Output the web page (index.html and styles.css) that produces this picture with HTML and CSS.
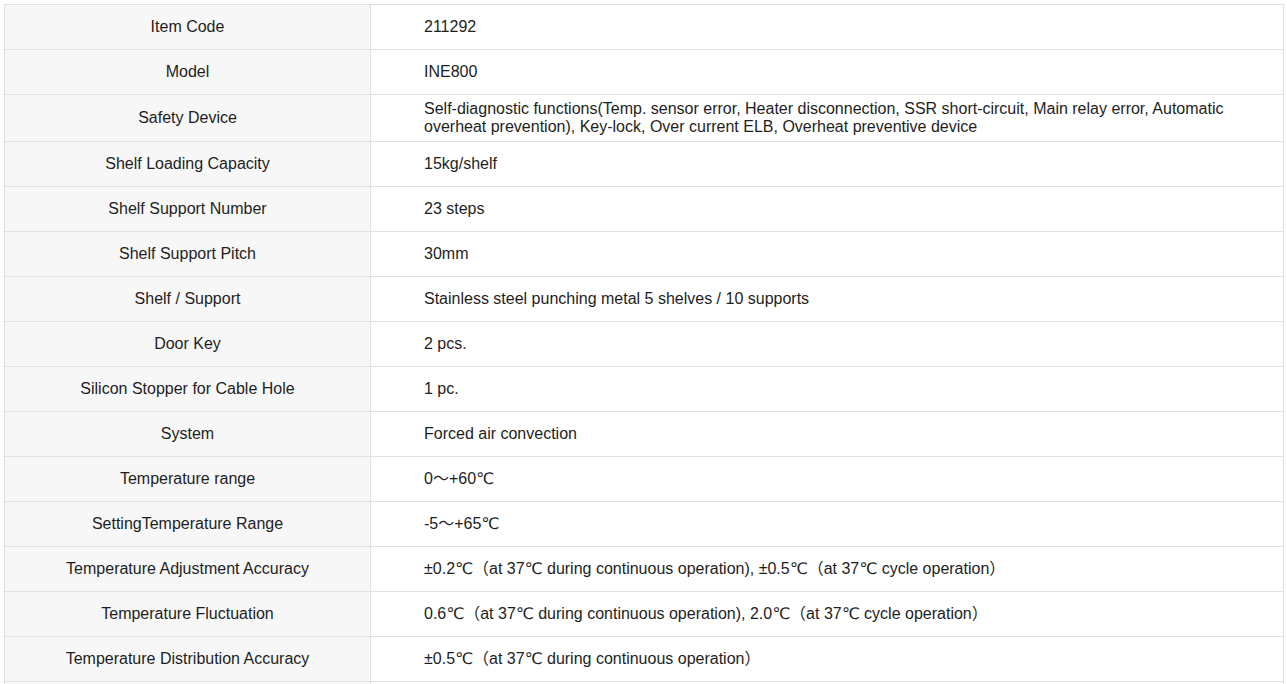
FILE: index.html
```html
<!DOCTYPE html>
<html>
<head>
<meta charset="utf-8">
<link rel="stylesheet" href="styles.css">
</head>
<body>
<div class="page">
<table class="spec">
<tr><th>Item Code</th><td>211292</td></tr>
<tr><th>Model</th><td>INE800</td></tr>
<tr><th>Safety Device</th><td>Self-diagnostic functions(Temp. sensor error, Heater disconnection, SSR short-circuit, Main relay error, Automatic overheat prevention), Key-lock, Over current ELB, Overheat preventive device</td></tr>
<tr><th>Shelf Loading Capacity</th><td>15kg/shelf</td></tr>
<tr><th>Shelf Support Number</th><td>23 steps</td></tr>
<tr><th>Shelf Support Pitch</th><td>30mm</td></tr>
<tr><th>Shelf / Support</th><td>Stainless steel punching metal 5 shelves / 10 supports</td></tr>
<tr><th>Door Key</th><td>2 pcs.</td></tr>
<tr><th>Silicon Stopper for Cable Hole</th><td>1 pc.</td></tr>
<tr><th>System</th><td>Forced air convection</td></tr>
<tr><th>Temperature range</th><td>0～+60℃</td></tr>
<tr><th>SettingTemperature Range</th><td>-5～+65℃</td></tr>
<tr><th>Temperature Adjustment Accuracy</th><td>±0.2℃（at 37℃ during continuous operation), ±0.5℃（at 37℃ cycle operation）</td></tr>
<tr><th>Temperature Fluctuation</th><td>0.6℃（at 37℃ during continuous operation), 2.0℃（at 37℃ cycle operation）</td></tr>
<tr><th>Temperature Distribution Accuracy</th><td>±0.5℃（at 37℃ during continuous operation）</td></tr>
<tr><th></th><td></td></tr>
</table>
</div>
</body>
</html>
```

FILE: styles.css
```css
html, body {
  margin: 0;
  padding: 0;
  background: #fff;
}
.page {
  padding: 4px 3px 0 4px;
}
.spec {
  width: 1280px;
  border-collapse: collapse;
  font-family: "Liberation Sans", Arial, "DejaVu Sans", "Noto Sans CJK SC", sans-serif;
  font-size: 16px;
  line-height: 18px;
  color: #1e1e1e;
}
.spec th, .spec td {
  border: 1px solid #e0e0e0;
  height: 34px;
  padding: 5px 0;
  vertical-align: middle;
}
.spec th {
  width: 365px;
  background: #f7f7f7;
  font-weight: normal;
  text-align: center;
}
.spec td {
  text-align: left;
  padding-left: 53px;
  padding-right: 20px;
}
```
